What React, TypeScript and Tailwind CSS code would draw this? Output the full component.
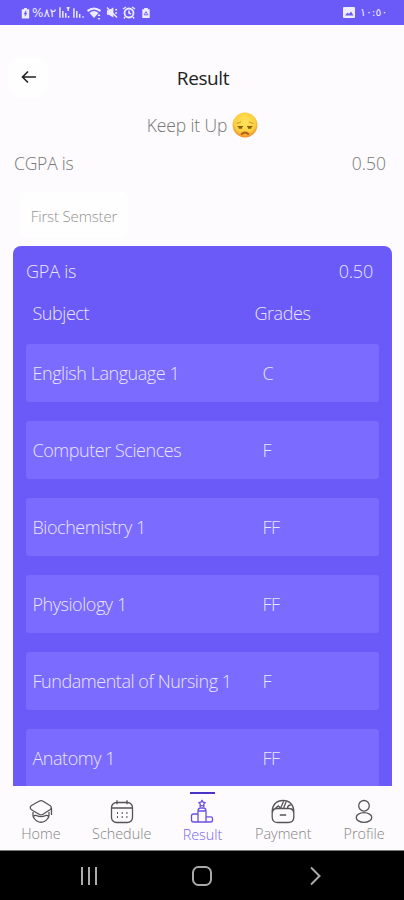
import type { ReactNode } from "react";

const rows: [string, string][] = [
  ["English Language 1", "C"],
  ["Computer Sciences", "F"],
  ["Biochemistry 1", "FF"],
  ["Physiology 1", "FF"],
  ["Fundamental of Nursing 1", "F"],
  ["Anatomy 1", "FF"],
];

function StatusBar() {
  return (
    <header className="h-[25px] shrink-0 bg-[#6b5af8] flex items-center justify-between pl-[21px] pr-[22px] text-[#efecff]">
      <div className="flex items-center">
        <svg width="9" height="12" viewBox="0 0 9 13">
          <path d="M3 1h3v1.500h2.500v10h-8v-10H3z" fill="currentColor" />
          <path d="M5 4 3 7.500h1.400L4 10l2-3.500H4.700z" fill="#6b5af8" stroke="#6b5af8" strokeWidth=".6" />
        </svg>
        <span className="ml-[2px] w-[24px] text-[12px] leading-none tracking-[-0.3px] whitespace-nowrap font-normal font-['DejaVu_Sans',sans-serif]">%٨٢</span>
        <svg className="ml-[3px]" width="26" height="14" viewBox="0 0 27 14" fill="none" stroke="currentColor" strokeWidth="1.500">
          <path d="M1 1v11M4 5v7M7 7v5M10 10v2M8 1.500h3M9.500 1v4M15.500 2v10M18.500 5v7M21.500 8v4M25 10.500v1.500" />
        </svg>
        <svg className="ml-[2px]" width="16" height="14" viewBox="0 0 16 14" fill="currentColor">
          <path d="M0 4Q7-1 14 4L13 6Q7 1 1 6z" />
          <path d="M2.500 7Q7 3 11.500 7L7 12z" />
          <path d="M12 8l1.500 2h-3zM12 14l-1.500-2h3z" />
        </svg>
        <svg className="ml-[3px]" width="12" height="13" viewBox="0 0 13 13">
          <path d="M1 4h2l5-3v11l-5-3H1z" fill="currentColor" />
          <path d="m1 1 11 11M10 4l2-1M10 7h2" stroke="currentColor" strokeWidth="1.500" />
        </svg>
        <svg className="ml-[4px]" width="14" height="13" viewBox="0 0 14 13" fill="none" stroke="currentColor">
          <circle cx="7" cy="7" r="4.500" strokeWidth="1.800" />
          <path d="m1 3 3-2M13 3l-3-2M7 4.500V7l2 1M3 11l-1 1.500M11 11l1 1.500" strokeWidth="1.500" />
        </svg>
        <svg className="ml-[5px]" width="10" height="12" viewBox="0 0 10 13">
          <path d="M3 1h4v1.500h2V12H1V2.500h2z" fill="currentColor" />
          <path d="m5 5 2 3.500H3z" fill="none" stroke="#6b5af8" />
        </svg>
      </div>
      <div className="flex items-center">
        <svg width="12" height="11" viewBox="0 0 12 11">
          <rect width="12" height="11" rx="1" fill="currentColor" />
          <path d="m2 8.500 2.500-3L6 7l2-2.500 2.500 4z" fill="#6b5af8" />
        </svg>
        <span dir="ltr" className="ml-[5px] w-[22px] text-[11px] leading-none tracking-[-0.8px] whitespace-nowrap font-normal font-['DejaVu_Sans',sans-serif]">١٠:٥٠</span>
      </div>
    </header>
  );
}

function SadEmoji() {
  return (
    <svg width="26" height="26" viewBox="0 0 26 26">
      <defs>
        <radialGradient id="face" cx="50%" cy="40%" r="60%">
          <stop offset="0" stopColor="#ffe45c" />
          <stop offset=".7" stopColor="#fdcf42" />
          <stop offset="1" stopColor="#ee8b25" />
        </radialGradient>
      </defs>
      <circle cx="13" cy="13" r="12.400" fill="url(#face)" />
      <g fill="none" stroke="#80600f" strokeLinecap="round">
        <path d="M5 11.300q2-.1 3.800-1.300M21 11.300q-2-.1-3.800-1.300" stroke="#b98a25" strokeWidth=".8" />
        <path d="M6 14.600h4.500M15.500 14.600H20" strokeWidth="1.100" />
        <path d="M7.500 15.900h1.800M16.700 15.900h1.800" strokeWidth="1.700" />
        <path d="M9.800 21.800q3.200-2.400 6.400 0" stroke="#b5631b" strokeWidth="2.200" />
      </g>
    </svg>
  );
}

const icons: Record<string, ReactNode> = {
  Home: (
    <>
      <path d="M10 1.700 2.500 6c-1.700 1-1.700 3.200 0 4.200l7.500 4.500c1.300.8 2.700.8 4 0l7-4.500c1.700-1 1.700-3.200 0-4.200L14 1.700c-1.300-.8-2.700-.8-4 0ZM22.500 8.500v7" />
      <path d="M4 12.500v3.500c0 1.200.5 2 1.300 3 3.400 5 10 5 13.400 0 .8-1 1.300-1.800 1.300-3v-3.500M4.500 17q1.200-1.800 3.200-.8 4.300 1.900 8.600 0 2-1 3.200.8" />
    </>
  ),
  Schedule: (
    <>
      <rect x="1.500" y="3" width="21" height="20" rx="5" />
      <path d="M7 .8v4M17 .8v4M2 8.500h20" />
      <path d="M7 13.500h1M11.700 13.500h1M16.400 13.500h1M7 17.500h1M11.700 17.500h1M16.400 17.500h1" strokeWidth="1.800" />
    </>
  ),
  Result: (
    <>
      <path d="M12 .8l1 1.800 2.200.5-1.500 1.600.3 2.100-2-.8-2 .8.300-2.100-1.500-1.600 2.200-.5z" />
      <path d="M8 22.500V12q0-3.500 2.500-3.500h3Q16 8.500 16 12v10.500zM8.500 11.500h7M8 14.500H3.500q-2 0-2 2v4q0 2 2 2h17q2 0 2-2V19q0-1.700-1.700-1.700H16" />
    </>
  ),
  Payment: (
    <>
      <path d="M1.200 13.500q.4-4.500 5-4.500h11.600q4.600 0 5 4.500v4q0 5.500-5.500 5.500H6.700q-5.500 0-5.500-5.500zM1.200 14v-2C1.200 5.500 5.500 1 12 1s10.800 4.500 10.800 11v2M8.800 15.500h6.400M4.500 8.800l3-2.500 2 2.500L12.500 2M12.500 8.800 15 2.500M16.500 8.800q0-3.300 3.300-3.300" />
    </>
  ),
  Profile: (
    <>
      <circle cx="12" cy="6.300" r="5.300" />
      <ellipse cx="12" cy="18" rx="7.800" ry="4.800" />
    </>
  ),
};

function NavItem({ name }: { name: string }) {
  const active = name === "Result";
  return (
    <button className={`relative flex flex-1 flex-col items-center pl-px pt-[13px] ${active ? "text-[#6550df]" : "text-[#555]"}`}>
      {active && <i className="absolute top-[6px] left-[28px] h-[2px] w-[25px] bg-[#4934c8]" />}
      <svg width="24" height="25" viewBox="0 0 24 24" fill="none" stroke="currentColor" strokeWidth="1.300" strokeLinejoin="round">
        {icons[name]}
      </svg>
      <span className={`text-[14.400px] leading-[20px] ${active ? "pt-px text-[#7966f0]" : "text-[#858585]"}`}>{name}</span>
    </button>
  );
}

export default function App() {
  return (
    <div className="h-[900px] w-[404px] overflow-hidden flex flex-col bg-[#fdfbfd] font-['Open_Sans',sans-serif] font-light">
      <StatusBar />
      <main className="flex min-h-0 flex-1 flex-col">
        <div className="mt-[32px] grid h-[40px] shrink-0 grid-cols-[40px_1fr_40px] items-center px-[8px]">
          <button className="flex size-[40px] items-center justify-center rounded-xl bg-[#fffefe] pl-px text-[#222]">
            <svg width="16" height="14" viewBox="0 0 16 14" fill="none" stroke="currentColor" strokeWidth="1.600">
              <path d="M15 7H2M7 1.500 1.500 7 7 12.500" />
            </svg>
          </button>
          <h1 className="pl-[2px] pt-[2px] text-center text-[19px] font-normal leading-[26px] tracking-[-0.4px] text-[#222]">Result</h1>
        </div>
        <div className="mt-[14px] flex h-[28px] shrink-0 items-center justify-center gap-[5px] pl-px text-[17.500px] tracking-[-0.100px] text-[#777]">
          <span>Keep it Up</span>
          <SadEmoji />
        </div>
        <div className="mt-[11px] flex h-[26px] shrink-0 items-center justify-between pl-[14px] pr-[18px] text-[17.500px] text-[#777]">
          <span className="tracking-[-0.200px]">CGPA is</span>
          <span>0.50</span>
        </div>
        <div className="ml-[20px] mt-[16px] flex h-[46px] w-[108px] shrink-0 items-center justify-center rounded-md bg-[#fffefe] pt-[3px] text-[15px] tracking-[-0.150px] text-[#929292]">First Semster</div>
        <section className="ml-[13px] mr-[12px] mt-[8px] min-h-0 flex-1 overflow-hidden rounded-t-[8px] bg-[#6b5af8] px-[13px] text-[18px] text-[#e9e5ff]">
          <div className="flex h-[50px] items-center justify-between pr-[6px]">
            <span className="tracking-[-0.200px]">GPA is</span>
            <span className="tracking-[-0.200px]">0.50</span>
          </div>
          <div className="flex h-[48px] items-start pl-[6.500px] pt-[4px] tracking-[-0.450px]">
            <span className="w-[222px]">Subject</span>
            <span>Grades</span>
          </div>
          <div className="flex flex-col gap-[19px]">
            {rows.map(([subject, grade]) => (
              <div key={subject} className="flex h-[58px] shrink-0 items-center rounded-[3px] bg-[#7b6bff] pl-[6.500px] pt-px tracking-[-0.450px]">
                <span className="w-[230px] whitespace-nowrap">{subject}</span>
                <span>{grade}</span>
              </div>
            ))}
          </div>
        </section>
      </main>
      <nav className="flex h-[64px] shrink-0 bg-[#fdfbfd]">
        {["Home", "Schedule", "Result", "Payment", "Profile"].map((name) => <NavItem key={name} name={name} />)}
      </nav>
      <footer className="flex h-[50px] shrink-0 items-center justify-center gap-[91px] border-t border-[#777] bg-black text-[#aaa]">
        <svg width="22" height="20" viewBox="0 0 22 20" stroke="currentColor" strokeWidth="2">
          <path d="M4 1v18M11 1v18M18 1v18" />
        </svg>
        <svg width="22" height="20" viewBox="0 0 22 20" fill="none" stroke="currentColor" strokeWidth="2">
          <rect x="2" y="1" width="18" height="18" rx="5.500" />
        </svg>
        <svg width="22" height="20" viewBox="0 0 22 20" fill="none" stroke="currentColor" strokeWidth="2">
          <path d="m7 1.500 8.500 8.500L7 18.500" />
        </svg>
      </footer>
    </div>
  );
}
